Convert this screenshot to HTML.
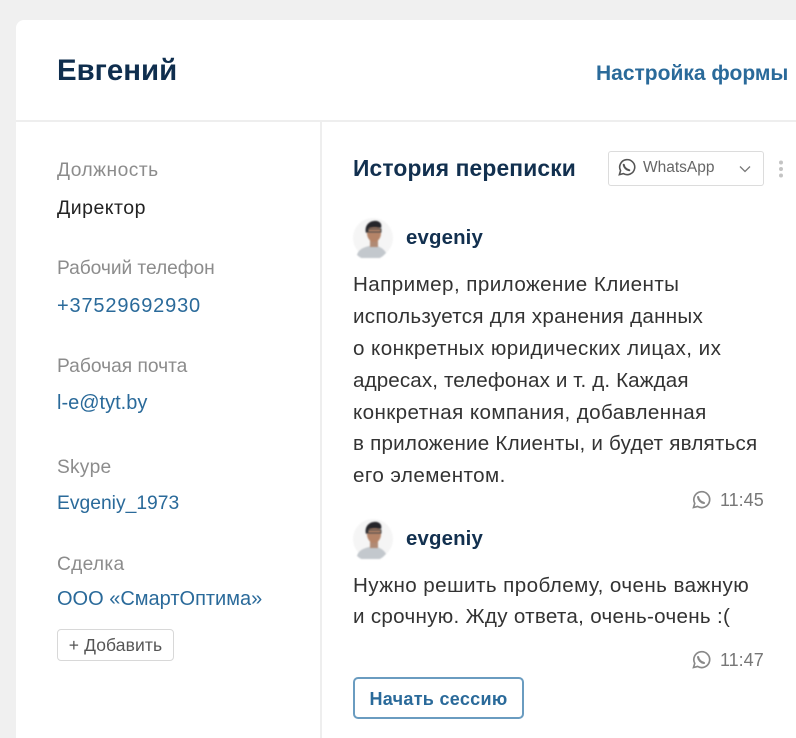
<!DOCTYPE html>
<html lang="ru"><head><meta charset="utf-8"><style>
html,body{margin:0;padding:0;width:796px;height:738px;overflow:hidden}
body{position:relative;background:#f0f0f0;font-family:"Liberation Sans",sans-serif}
.card{position:absolute;left:16px;top:20px;width:780px;height:718px;background:#fff;border-radius:8px 0 0 0}
.hl{position:absolute;left:16px;top:120px;width:780px;height:2px;background:#eeeeee}
.vl{position:absolute;left:320px;top:121px;width:2px;height:617px;background:#eeeeee}
.t{position:absolute;white-space:nowrap;line-height:24px}
.g{color:#8c8c8c;font-size:19.2px}
.b{color:#2a6a9a;font-size:20px}
.m{color:#333;font-size:20.6px;left:353px}
.n{color:#12304f;font-size:20.4px;font-weight:bold;left:406px;letter-spacing:.15px}
.tm{color:#777;font-size:18px}
svg{position:absolute}
.av{filter:blur(.7px)}
</style></head><body>
<div class="card"></div><div class="hl"></div><div class="vl"></div>
<div class="t" style="left:57px;top:53px;font-size:29.4px;line-height:36px;font-weight:bold;color:#0f2e4e">Евгений</div>
<div class="t" style="left:596px;top:62px;font-size:21px;font-weight:bold;color:#2a6a9a">Настройка формы</div>

<div class="t g" style="left:57px;top:159px;letter-spacing:.5px">Должность</div>
<div class="t" style="left:57px;top:196px;font-size:19.5px;color:#222;letter-spacing:.5px">Директор</div>
<div class="t g" style="left:57px;top:257px;letter-spacing:-.05px">Рабочий телефон</div>
<div class="t b" style="left:57px;top:294px;letter-spacing:.83px">+37529692930</div>
<div class="t g" style="left:57px;top:355px">Рабочая почта</div>
<div class="t b" style="left:57px;top:391px">l-e@tyt.by</div>
<div class="t g" style="left:57px;top:456px;letter-spacing:.2px">Skype</div>
<div class="t b" style="left:57px;top:492px;font-size:19.3px">Evgeniy_1973</div>
<div class="t g" style="left:57px;top:553px;letter-spacing:.27px">Сделка</div>
<div class="t b" style="left:57px;top:587px">ООО «СмартОптима»</div>
<div class="t" style="left:57px;top:629px;width:115px;height:30px;border:1px solid #d8d8d8;border-radius:4px;text-align:center;line-height:30px;font-size:17.5px;color:#555;letter-spacing:.1px">+ Добавить</div>

<div class="t" style="left:353px;top:156px;font-size:22.8px;font-weight:bold;color:#12304f;letter-spacing:.15px">История переписки</div>
<div style="position:absolute;left:608px;top:151px;width:154px;height:33px;border:1px solid #dcdcdc;border-radius:3px"></div>
<svg style="left:617px;top:158px" width="19" height="19" viewBox="0 0 24 24" fill="none" stroke="#555" stroke-width="2"><path d="M3 21l1.500-5A9.500 9.500 0 1 1 8 19.700z"/><path d="M8.500 8.500c.5 3.500 3.500 6.500 7 7" stroke-width="2.600" stroke-linecap="round"/></svg>
<div class="t" style="left:643px;top:156px;font-size:15.5px;color:#666">WhatsApp</div>
<svg style="left:739px;top:165px" width="12" height="8" viewBox="0 0 12 8" fill="none" stroke="#777" stroke-width="1.300"><path d="M1 1.500l5 5 5-5"/></svg>
<svg style="left:777px;top:160px" width="8" height="18"><circle cx="4" cy="2.500" r="2" fill="#c4c4c4"/><circle cx="4" cy="9" r="2" fill="#c4c4c4"/><circle cx="4" cy="15.500" r="2" fill="#c4c4c4"/></svg>

<svg class="av" style="left:353px;top:218px" width="40" height="40" viewBox="0 0 40 40"><circle cx="20" cy="20" r="20" fill="#f5f5f5"/><path d="M4 37c2-7 9-8 12-9h8c3 1 7 3 9 7a20 20 0 0 1-29 2z" fill="#c3c8cd"/><rect x="17" y="20" width="8" height="9" fill="#b08a74"/><ellipse cx="21" cy="15" rx="7" ry="9" fill="#b58468"/><path d="M13 15c-2-9 5-13 11-12 4 1 5 4 4 7-4-1-9-1-12 0 0 2-1 4-3 5z" fill="#25252a"/><rect x="15" y="11" width="13" height="3" fill="none" stroke="#444" stroke-width="1"/></svg>
<div class="t n" style="top:226px">evgeniy</div>
<div class="t m" style="top:273px;letter-spacing:.43px">Например, приложение Клиенты</div>
<div class="t m" style="top:305px;letter-spacing:.28px">используется для хранения данных</div>
<div class="t m" style="top:337px;letter-spacing:.44px">о конкретных юридических лицах, их</div>
<div class="t m" style="top:369px;letter-spacing:.12px">адресах, телефонах и т. д. Каждая</div>
<div class="t m" style="top:401px;letter-spacing:.4px">конкретная компания, добавленная</div>
<div class="t m" style="top:432px;letter-spacing:.22px">в приложение Клиенты, и будет являться</div>
<div class="t m" style="top:464px;letter-spacing:.43px">его элементом.</div>
<svg style="left:691px;top:490px" width="20" height="20" viewBox="0 0 24 24" fill="none" stroke="#888" stroke-width="2"><path d="M3 21l1.500-5A9.500 9.500 0 1 1 8 19.700z"/><path d="M8.500 8.500c.5 3.500 3.500 6.500 7 7" stroke-width="2.600" stroke-linecap="round"/></svg>
<div class="t tm" style="left:720px;top:488px">11:45</div>

<svg class="av" style="left:353px;top:519px" width="40" height="40" viewBox="0 0 40 40"><circle cx="20" cy="20" r="20" fill="#f5f5f5"/><path d="M4 37c2-7 9-8 12-9h8c3 1 7 3 9 7a20 20 0 0 1-29 2z" fill="#c3c8cd"/><rect x="17" y="20" width="8" height="9" fill="#b08a74"/><ellipse cx="21" cy="15" rx="7" ry="9" fill="#b58468"/><path d="M13 15c-2-9 5-13 11-12 4 1 5 4 4 7-4-1-9-1-12 0 0 2-1 4-3 5z" fill="#25252a"/><rect x="15" y="11" width="13" height="3" fill="none" stroke="#444" stroke-width="1"/></svg>
<div class="t n" style="top:527px">evgeniy</div>
<div class="t m" style="top:574px;letter-spacing:.43px">Нужно решить проблему, очень важную</div>
<div class="t m" style="top:605px;letter-spacing:.3px">и срочную. Жду ответа, очень-очень :(</div>
<svg style="left:691px;top:650px" width="20" height="20" viewBox="0 0 24 24" fill="none" stroke="#888" stroke-width="2"><path d="M3 21l1.500-5A9.500 9.500 0 1 1 8 19.700z"/><path d="M8.500 8.500c.5 3.500 3.500 6.500 7 7" stroke-width="2.600" stroke-linecap="round"/></svg>
<div class="t tm" style="left:720px;top:648px">11:47</div>
<div class="t" style="left:353px;top:677px;width:167px;height:38px;border:2px solid #6a9cc0;border-radius:5px;text-align:center;line-height:40px;font-size:18px;font-weight:bold;color:#2a6a9a;letter-spacing:.3px">Начать сессию</div>
</body></html>
